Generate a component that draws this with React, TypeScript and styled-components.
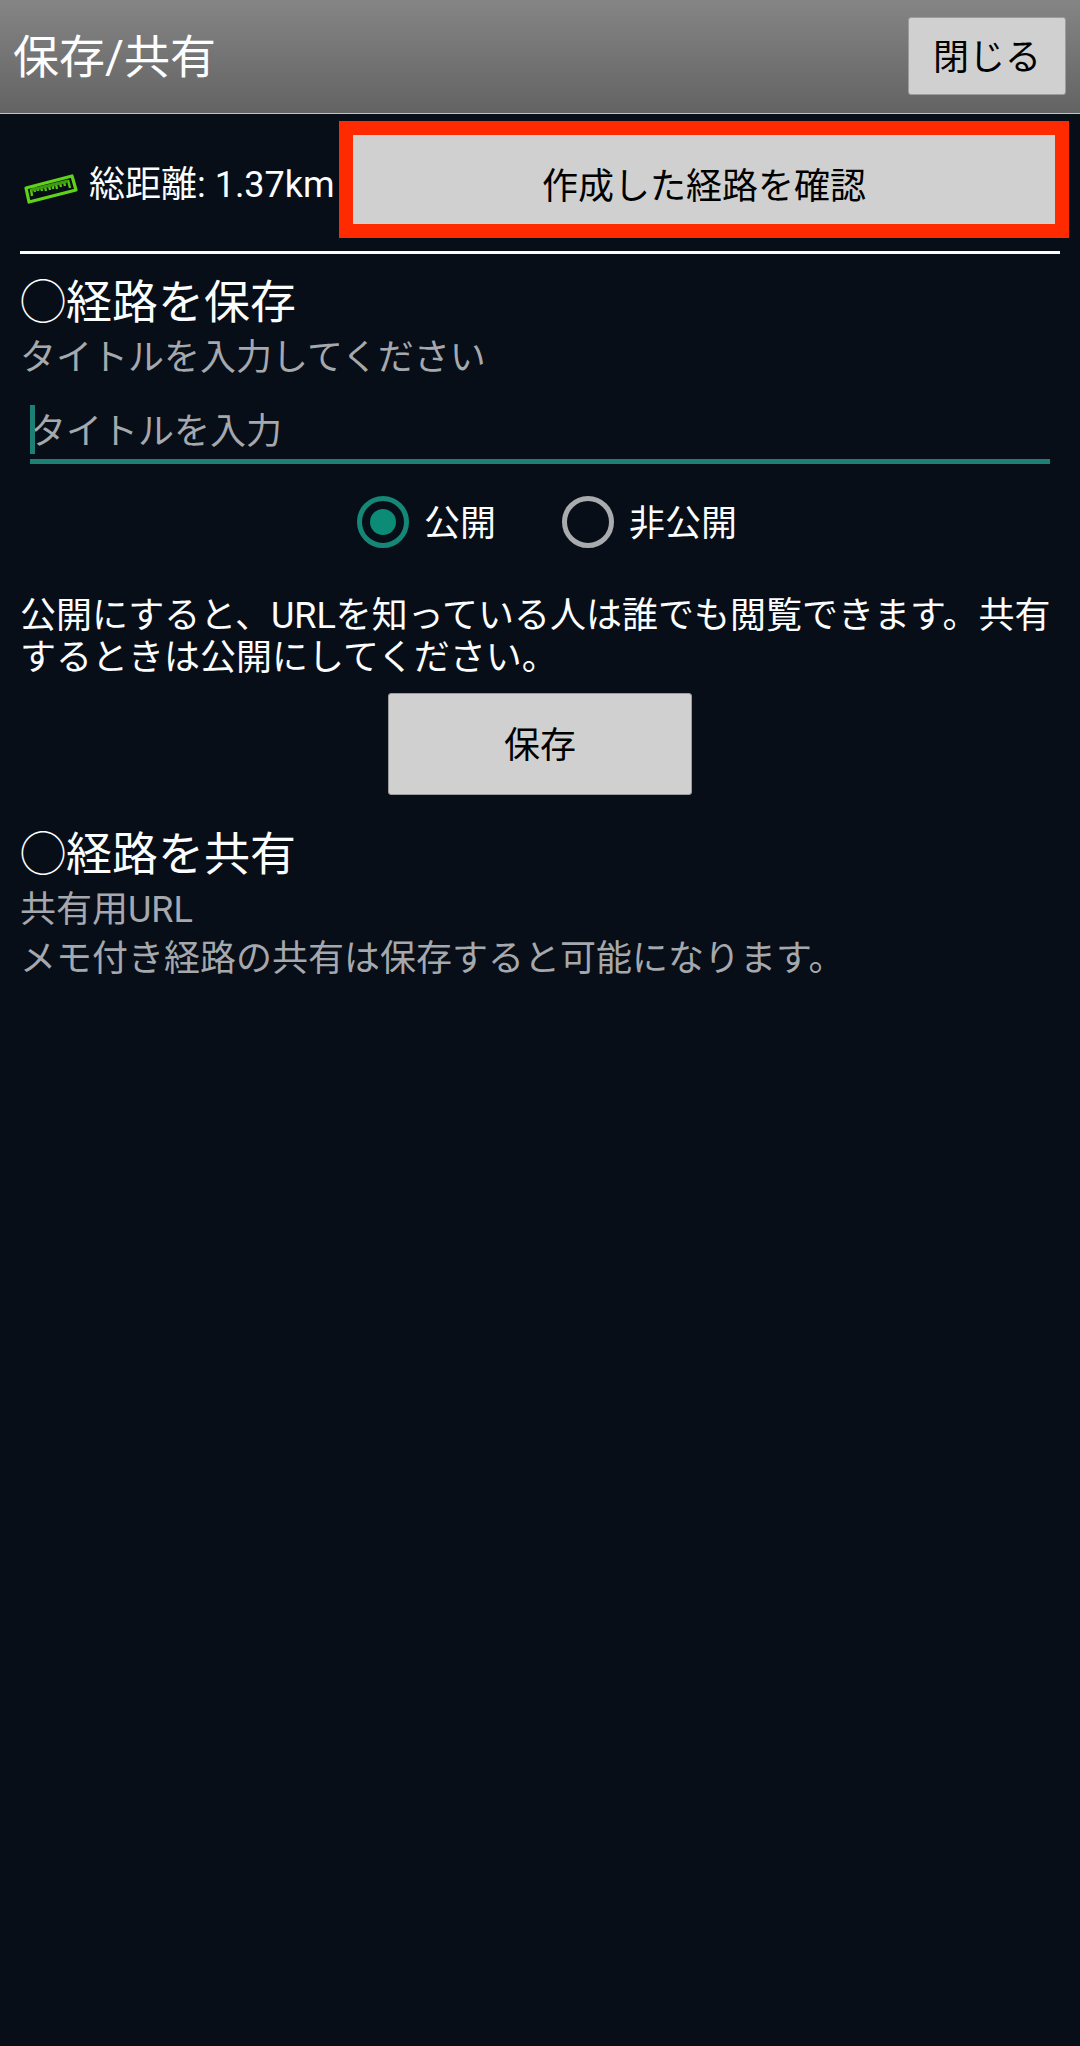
import React, { useState } from "react";
import styled, { createGlobalStyle } from "styled-components";

const GlobalStyle = createGlobalStyle`
  *, *::before, *::after { box-sizing: border-box; }
  body {
    margin: 0;
    background: #070e17;
    color: #fbfdff;
    font-family: Roboto, "Noto Sans CJK JP", sans-serif;
    font-size: 36px;
    line-height: 42px;
  }
  button, input { font: inherit; }
`;

const Header = styled.header`
  display: flex;
  align-items: center;
  justify-content: space-between;
  height: 114px;
  padding: 0 14px 2px 13px;
  background: linear-gradient(#858585, #636363);
  border-bottom: 1px solid #c4c4c8;
`;

const ScreenTitle = styled.h1`
  margin: 0;
  padding-top: 2px;
  font-size: 46px;
  line-height: 54px;
  font-weight: 400;
`;

const Button = styled.button`
  padding: 4px 0 0;
  border: 1px solid #9c9c9c;
  border-radius: 3px;
  background: #d0d0d0;
  color: #000;
`;

const CloseButton = styled(Button)`
  width: 158px;
  height: 78px;
`;

const ConfirmButton = styled(Button)`
  flex: 1;
  height: 117px;
  padding-top: 14px;
  border: 14px solid #ff2a00;
  border-radius: 0;
`;

const SaveButton = styled(Button)`
  display: block;
  width: 304px;
  height: 102px;
  margin: 14px auto 0;
`;

const Summary = styled.section`
  display: flex;
  align-items: center;
  padding: 7px 11px 13px 20px;
`;

const Distance = styled.p`
  display: flex;
  align-items: flex-end;
  gap: 9px;
  width: 319px;
  margin: 0;
  padding-top: 11px;
  white-space: nowrap;
`;

const Section = styled.section`
  margin: 0 20px;
`;

const Divider = styled.hr`
  height: 3px;
  margin: 0 20px 21px;
  border: 0;
  background: #fbfdff;
`;

const Heading = styled.h2`
  margin: 0 0 5px;
  font-size: 46px;
  line-height: 54px;
  font-weight: 400;
`;

const Note = styled.p`
  margin: 0;
  color: #a5a8ac;
  line-height: 49px;
`;

const FieldLabel = styled.label`
  display: block;
  color: #a5a8ac;
  line-height: 49px;
`;

const Field = styled.div`
  position: relative;
  margin: 22px 10px 0;
`;

const TitleInput = styled.input`
  display: block;
  width: 100%;
  height: 59px;
  padding: 0;
  border: 0;
  border-bottom: 5px solid #1c8074;
  outline: 0;
  background: transparent;
  color: #fbfdff;
  caret-color: transparent;
  &::placeholder { color: #a5a8ac; opacity: 1; }
  &:not(:placeholder-shown) { caret-color: #1c8074; }
`;

const Caret = styled.span`
  position: absolute;
  top: 0;
  left: 0;
  width: 5px;
  height: 49px;
  background: #1c8074;
`;

const Choices = styled.fieldset`
  display: flex;
  justify-content: center;
  gap: 66px;
  margin: 32px 0 47px;
  padding: 0 0 0 14px;
  border: 0;
`;

const Choice = styled.label`
  display: flex;
  align-items: center;
  gap: 15px;
`;

const ChoiceText = styled.span`
  padding-top: 4px;
`;

const Radio = styled.input`
  appearance: none;
  display: grid;
  place-items: center;
  width: 52px;
  height: 52px;
  margin: 0;
  border: 5px solid #a9abae;
  border-radius: 50%;
  &:checked { border-color: #148776; }
  &:checked::before {
    content: "";
    width: 26px;
    height: 26px;
    border-radius: 50%;
    background: #0c8b76;
  }
`;

const Description = styled.p`
  margin: 0;
`;

const ShareSection = styled(Section)`
  margin-top: 32px;
`;

const RulerIcon = () => (
  <svg width="60" height="36" viewBox="0 0 60 36" fill="none" aria-hidden="true">
    <path d="M6 18 52 6 56 20 9 32Z" stroke="#5fd318" strokeWidth="3.2" strokeLinejoin="round" />
    <path
      d="M12 26 11 19M14 17 15 22M18 17V21M21 17 22 21M25 17 26 21M29 16 30 20M33 15V19M36 14 37 19M40 13 41 17M44 12 45 16M48 10 50 18"
      stroke="#55c414"
      strokeWidth="2.4"
    />
    <path d="M11 20 48 11" stroke="#3f9a12" strokeWidth="3" />
  </svg>
);

export default function App() {
  const [title, setTitle] = useState("");
  const [visibility, setVisibility] = useState("public");

  return (
    <>
      <GlobalStyle />
      <Header>
        <ScreenTitle>保存/共有</ScreenTitle>
        <CloseButton type="button">閉じる</CloseButton>
      </Header>
      <main>
        <Summary>
          <Distance>
            <RulerIcon />
            総距離: 1.37km
          </Distance>
          <ConfirmButton type="button">作成した経路を確認</ConfirmButton>
        </Summary>
        <Divider />
        <Section>
          <Heading>◯経路を保存</Heading>
          <FieldLabel htmlFor="route-title">タイトルを入力してください</FieldLabel>
          <Field>
            <TitleInput
              id="route-title"
              type="text"
              placeholder="タイトルを入力"
              value={title}
              onChange={(e) => setTitle(e.target.value)}
            />
            {title === "" && <Caret />}
          </Field>
          <Choices aria-label="公開設定">
            <Choice>
              <Radio
                type="radio"
                name="visibility"
                checked={visibility === "public"}
                onChange={() => setVisibility("public")}
              />
              <ChoiceText>公開</ChoiceText>
            </Choice>
            <Choice>
              <Radio
                type="radio"
                name="visibility"
                checked={visibility === "private"}
                onChange={() => setVisibility("private")}
              />
              <ChoiceText>非公開</ChoiceText>
            </Choice>
          </Choices>
          <Description>
            公開にすると、URLを知っている人は誰でも閲覧できます。共有するときは公開にしてください。
          </Description>
          <SaveButton type="button">保存</SaveButton>
        </Section>
        <ShareSection>
          <Heading>◯経路を共有</Heading>
          <Note>共有用URL</Note>
          <Note>メモ付き経路の共有は保存すると可能になります。</Note>
        </ShareSection>
      </main>
    </>
  );
}
